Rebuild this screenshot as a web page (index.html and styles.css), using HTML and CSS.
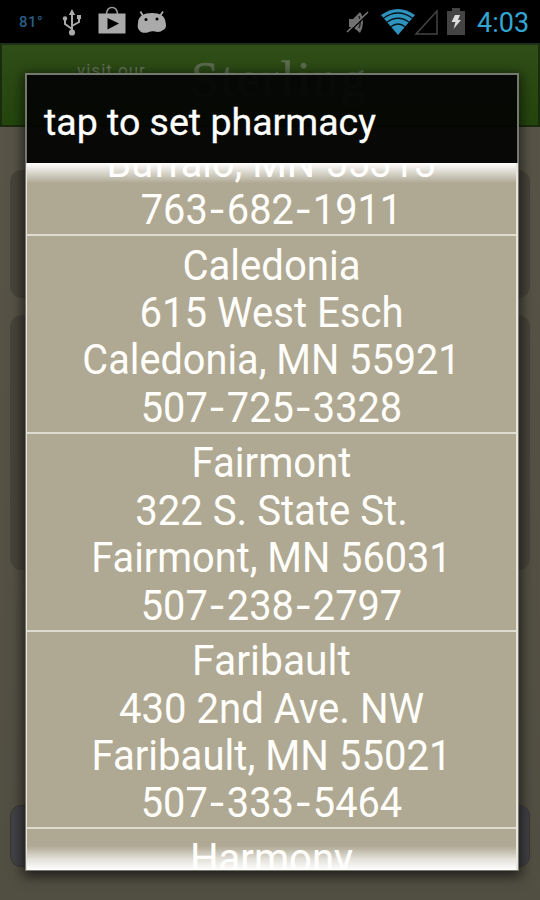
FILE: index.html
```
<!DOCTYPE html>
<html lang="en">
<head>
<meta charset="utf-8">
<title>Set pharmacy</title>
<link rel="stylesheet" href="styles.css">
</head>
<body>
<header class="status">
  <span class="temp">81°</span>
  <svg class="usb" width="20" height="28" viewBox="0 0 20 28" fill="none" stroke="#aaa" stroke-width="2"><path d="M10 6V23M10 20L3 15V9M10 17l7-4V9"/><path d="M10 0l3.2 6H6.8z" fill="#aaa" stroke="none"/><circle cx="10" cy="23.5" r="3.1" fill="#aaa" stroke="none"/><circle cx="3" cy="9.5" r="2.2" fill="#aaa" stroke="none"/><path d="M15 6h4v4h-4z" fill="#aaa" stroke="none"/></svg>
  <svg class="store" width="28" height="28" viewBox="0 0 28 28"><path d="M8.5 8Q9 1.500 14 1.500T19.500 8" fill="none" stroke="#999" stroke-width="1.600"/><path d="M.5 7.500h27v20H.5z" fill="#aaa"/><path d="M9.500 12v11.500l11.500-6z" fill="#000"/></svg>
  <svg class="droid" width="30" height="24" viewBox="0 0 30 24"><path d="M6 6L3.500 1.500M23 6l3-4.500" stroke="#aaa" stroke-width="1.800"/><path d="M1 13C1 6 7 3 15 3s13 3 13.500 9c1 4 .5 7-2.500 8-2 2-5 2.500-8 1.500-2-.5-4-.5-6 .5-4 1.500-8 1-9.500-1.500C.5 18.500.5 16 1 13z" fill="#aaa"/><circle cx="9" cy="9.500" r="1.500"/><circle cx="20" cy="9" r="1.500"/></svg>
  <svg class="mute" width="24" height="25" viewBox="0 0 24 25"><path d="M3 9h4l7-7q3 4 3 10t-3 11l-7-6H3z" fill="#707070"/><path d="M13 6q2.500 6 0 12" fill="none" stroke="#222" stroke-width="1.500"/><path d="M2.500 22.500L23 3" stroke="#000" stroke-width="1.500"/><path d="M1 22L22 2" stroke="#777" stroke-width="1.600"/></svg>
  <svg class="wifi" width="34" height="26" viewBox="0 0 34 26"><path d="M0 6Q17-6 34 6L17 26z" fill="#2e94bd"/><path d="M2 9.500Q17-1.500 32 9.500M5.500 13.500Q17 5 28.500 13.500M9.500 18Q17 12 24.500 18" fill="none" stroke="#04141b" stroke-width="1.300"/></svg>
  <svg class="signal" width="24" height="26" viewBox="0 0 24 26"><path d="M2 25L23 2v23z" fill="none" stroke="#444" stroke-width="1.500"/></svg>
  <svg class="battery" width="18" height="27" viewBox="0 0 18 27"><path d="M5 0h8v3h5v24H0V3h5z" fill="#444"/><path d="M8 7h5l-2 5h3L6.500 21l2-7H4.500z" fill="#ddd"/></svg>
  <span class="clock">4:03</span>
</header>
<main class="page">
  <div class="banner"><span class="visit">visit our</span><span class="brand">Sterling</span></div>
  <div class="card card-a"></div>
  <div class="card card-b"></div>
  <div class="button"></div>
</main>
<section class="dialog">
  <h1 class="title">tap to set pharmacy</h1>
  <div class="list">
    <div class="item first">
      <div class="l city">Buffalo, MN 55313</div>
      <div class="l phone">763<i>-</i>682<i>-</i>1911</div>
    </div>
    <div class="item">
      <div class="l">Caledonia</div>
      <div class="l">615 West Esch</div>
      <div class="l city">Caledonia, MN 55921</div>
      <div class="l phone">507<i>-</i>725<i>-</i>3328</div>
    </div>
    <div class="item">
      <div class="l">Fairmont</div>
      <div class="l">322 S. State St.</div>
      <div class="l city">Fairmont, MN 56031</div>
      <div class="l phone">507<i>-</i>238<i>-</i>2797</div>
    </div>
    <div class="item">
      <div class="l wide">Faribault</div>
      <div class="l">430 2nd Ave. NW</div>
      <div class="l">Faribault, MN 55021</div>
      <div class="l phone">507<i>-</i>333<i>-</i>5464</div>
    </div>
    <div class="item">
      <div class="l">Harmony</div>
    </div>
  </div>
</section>
</body>
</html>
```
FILE: styles.css
```
* { box-sizing: border-box; }
body {
  margin: 0;
  width: 540px;
  height: 900px;
  overflow: hidden;
  position: relative;
  background: #535043;
  font-family: Roboto, "Liberation Sans", sans-serif;
}
.status {
  height: 43px;
  background: #000;
  display: flex;
  align-items: center;
  padding-left: 19px;
}
.status svg { flex: none; }
.temp { width: 43px; font-size: 15px; font-weight: 500; letter-spacing: 0.5px; color: #285d87; }
.usb { margin-top: 2px; }
.store { margin: -3px 0 0 16px; }
.droid { margin: 0 0 0 11px; }
.mute { margin: 2px 0 0 179px; }
.wifi { margin-left: 11px; }
.signal { margin-left: -1px; }
.battery { margin-left: 9px; }
.clock { margin: 3px 0 0 12px; font-size: 27px; color: #33a5d2; }
.page { height: 857px; background: linear-gradient(#585548, #514e42); overflow: hidden; }
.banner {
  height: 84px;
  border: 2px solid #1b2b10;
  border-top-color: #20311a;
  background: linear-gradient(#304e18, #24460d);
  display: flex;
  padding-left: 75px;
  color: #66745b;
}
.visit { width: 114px; padding-top: 15px; font-size: 17px; letter-spacing: 1px; }
.brand { padding-top: 5px; font: 50px "Liberation Serif", serif; letter-spacing: 2.300px; -webkit-text-stroke: 0.6px #5c6d50; color: #5c6d50; }
.card { margin: 0 10px; border-radius: 12px; background: #47453b; }
.card-a { margin-top: 43px; height: 128px; }
.card-b { margin-top: 17px; height: 255px; }
.button {
  margin: 235px 10px 0;
  height: 62px;
  border-radius: 11px;
  background: #434244;
  border: 1px solid #37363a;
}
.dialog {
  position: absolute;
  left: 25px;
  top: 73px;
  width: 494px;
  height: 798px;
  border: 2px solid #74786f;
  background: rgba(3, 4, 3, 0.94);
  box-shadow: 0 3px 12px 2px rgba(0, 0, 0, 0.65);
  display: flex;
  flex-direction: column;
}
.title {
  margin: 0;
  height: 88px;
  padding: 25px 0 0 17px;
  font-size: 37.500px;
  line-height: 44px;
  font-weight: 400;
  -webkit-text-stroke: 0.3px #fff;
  color: #fff;
  white-space: nowrap;
}
.list {
  position: relative;
  flex: 1;
  min-height: 0;
  margin: 0 -1px -1px;
  overflow: hidden;
  background: #afa994;
  border: 1px solid #e7e5dc;
  border-width: 0 2px 0 1px;
}
.list::before, .list::after {
  content: "";
  position: absolute;
  z-index: 1;
  left: 0;
  right: 0;
  top: 0;
  height: 20px;
  background: linear-gradient(#fff, rgba(255, 255, 255, 0.65) 35%, rgba(255, 255, 255, 0));
}
.list::after {
  top: auto;
  bottom: 0;
  height: 24px;
  background: linear-gradient(rgba(255, 255, 255, 0), rgba(255, 255, 255, 0.65) 55%, #fff);
}
.item {
  height: 197.750px;
  padding-top: 5.700px;
  border-bottom: 2px solid #dedbcf;
}
.first { display: flow-root; height: 73px; padding: 0; }
.first .l:first-child { margin-top: -24px; }
.l {
  height: 47.400px;
  line-height: 47.400px;
  font-size: 42px;
  text-align: center;
  color: #fffefa;
  white-space: nowrap;
  transform: scaleX(0.955);
}
.city { transform: scaleX(0.945); }
.wide { transform: scaleX(0.972); }
.phone { transform: scaleX(0.947); }
.phone i {
  display: inline-block;
  width: 20px;
  font-style: normal;
  transform: scaleX(1.28);
}
```
